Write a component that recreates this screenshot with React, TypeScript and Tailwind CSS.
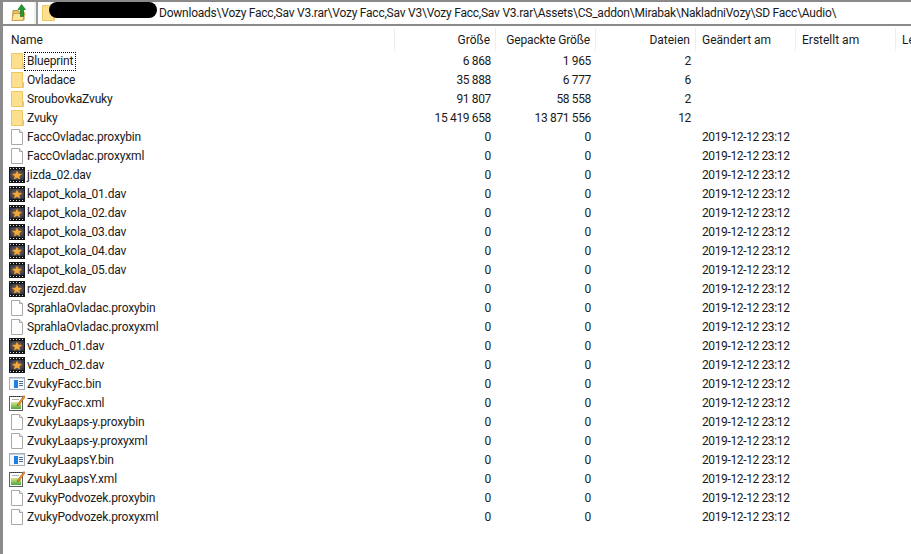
const FONT = "font-['Roboto',sans-serif]";

type Kind = 'folder' | 'file' | 'dav' | 'bin' | 'xml';

interface Row {
  name: string;
  kind: Kind;
  size: string;
  packed: string;
  files?: string;
}

const rows: Row[] = [
  { name: 'Blueprint', kind: 'folder', size: '6 868', packed: '1 965', files: '2' },
  { name: 'Ovladace', kind: 'folder', size: '35 888', packed: '6 777', files: '6' },
  { name: 'SroubovkaZvuky', kind: 'folder', size: '91 807', packed: '58 558', files: '2' },
  { name: 'Zvuky', kind: 'folder', size: '15 419 658', packed: '13 871 556', files: '12' },
  { name: 'FaccOvladac.proxybin', kind: 'file', size: '0', packed: '0' },
  { name: 'FaccOvladac.proxyxml', kind: 'file', size: '0', packed: '0' },
  { name: 'jizda_02.dav', kind: 'dav', size: '0', packed: '0' },
  { name: 'klapot_kola_01.dav', kind: 'dav', size: '0', packed: '0' },
  { name: 'klapot_kola_02.dav', kind: 'dav', size: '0', packed: '0' },
  { name: 'klapot_kola_03.dav', kind: 'dav', size: '0', packed: '0' },
  { name: 'klapot_kola_04.dav', kind: 'dav', size: '0', packed: '0' },
  { name: 'klapot_kola_05.dav', kind: 'dav', size: '0', packed: '0' },
  { name: 'rozjezd.dav', kind: 'dav', size: '0', packed: '0' },
  { name: 'SprahlaOvladac.proxybin', kind: 'file', size: '0', packed: '0' },
  { name: 'SprahlaOvladac.proxyxml', kind: 'file', size: '0', packed: '0' },
  { name: 'vzduch_01.dav', kind: 'dav', size: '0', packed: '0' },
  { name: 'vzduch_02.dav', kind: 'dav', size: '0', packed: '0' },
  { name: 'ZvukyFacc.bin', kind: 'bin', size: '0', packed: '0' },
  { name: 'ZvukyFacc.xml', kind: 'xml', size: '0', packed: '0' },
  { name: 'ZvukyLaaps-y.proxybin', kind: 'file', size: '0', packed: '0' },
  { name: 'ZvukyLaaps-y.proxyxml', kind: 'file', size: '0', packed: '0' },
  { name: 'ZvukyLaapsY.bin', kind: 'bin', size: '0', packed: '0' },
  { name: 'ZvukyLaapsY.xml', kind: 'xml', size: '0', packed: '0' },
  { name: 'ZvukyPodvozek.proxybin', kind: 'file', size: '0', packed: '0' },
  { name: 'ZvukyPodvozek.proxyxml', kind: 'file', size: '0', packed: '0' },
];

function FileIcon({ kind }: { kind: Kind }) {
  if (kind === 'folder') {
    return (
      <svg width="16" height="16" viewBox="0 0 16 16">
        <path d="M2.5 0.5H13.5V15.5H2.5Z" fill="#fde08f" stroke="#eec75f" />
        <path d="M13.5 10.5H14.5V15.5H13.5Z" fill="#fff6d8" stroke="#e6c670" />
      </svg>
    );
  }
  if (kind === 'file') {
    return (
      <svg width="16" height="16" viewBox="0 0 16 16">
        <path d="M2.5 0.5H10.5L13.5 3.5V15.5H2.5Z" fill="#fff" stroke="#a8a8a8" />
        <path d="M10.5 0.5V3.5H13.5" fill="#f0f0f0" stroke="#a8a8a8" />
      </svg>
    );
  }
  if (kind === 'dav') {
    return (
      <svg width="16" height="16" viewBox="0 0 16 16">
        <defs>
          <radialGradient id="davGlow" cx="0.5" cy="0.5" r="0.6">
            <stop offset="0" stopColor="#a8703a" />
            <stop offset="1" stopColor="#27364f" />
          </radialGradient>
        </defs>
        <rect x="0" y="0" width="16" height="16" fill="#161616" />
        <rect x="1" y="3" width="14" height="10" fill="url(#davGlow)" />
        <path d="M1 1h1v1H1zM4 1h1v1H4zM7 1h1v1H7zM10 1h1v1h-1zM13 1h1v1h-1zM1 14h1v1H1zM4 14h1v1H4zM7 14h1v1H7zM10 14h1v1h-1zM13 14h1v1h-1z" fill="#e0e0e0" />
        <path d="M8 3.5L9.3 6.8L13 7L10.2 9.2L11.2 12.6L8 10.7L4.8 12.6L5.8 9.2L3 7L6.7 6.8Z" fill="#f2a83a" />
      </svg>
    );
  }
  if (kind === 'bin') {
    return (
      <svg width="16" height="16" viewBox="0 0 16 16">
        <rect x="0.5" y="1.5" width="15" height="12" fill="#f4f7fb" stroke="#a3abb6" />
        <rect x="1" y="2" width="14" height="1" fill="#c4cedb" />
        <rect x="5" y="4" width="4" height="8" fill="#1f7fe0" />
        <path d="M10 5.5h4M10 7.5h4M10 9.5h4" stroke="#56708f" />
      </svg>
    );
  }
  return (
    <svg width="16" height="16" viewBox="0 0 16 16">
      <defs>
        <linearGradient id="xmlFill" x1="0" y1="0" x2="0" y2="1">
          <stop offset="0" stopColor="#d8e88a" />
          <stop offset="1" stopColor="#4fa83a" />
        </linearGradient>
      </defs>
      <rect x="0.5" y="1.5" width="13" height="14" fill="#fff" stroke="#5f5f5f" />
      <path d="M2 1.5h1M4 1.5h1M6 1.5h1M8 1.5h1M10 1.5h1" stroke="#333" />
      <rect x="2" y="7" width="10" height="7" fill="url(#xmlFill)" />
      <path d="M3 4.5h7" stroke="#b0b0b0" />
      <path d="M15 0.5L9 8.5L8 11L10.2 9.8L16 2Z" fill="#e8a020" stroke="#b3431e" strokeWidth="0.6" />
    </svg>
  );
}

function UpIcon() {
  return (
    <svg width="16" height="18" viewBox="0 0 16 18">
      <path d="M2 6.5H7L8 8H13V16H1.5Z" fill="#eebf5c" stroke="#c0943a" />
      <path d="M2.5 9.5H14L11.5 16.5H0.8Z" fill="#fbe39a" stroke="#cfa14a" />
      <path d="M10.5 0.5L14.5 5.5H12.5V12.5H9.5V5.5H7Z" fill="#1e9a30" stroke="#137023" strokeWidth="0.7" />
    </svg>
  );
}

const headerCell = 'h-full flex items-center border-r border-[#eeeeee]';
const columns = 'grid grid-cols-[392px_101px_100px_100px_100px_100px_15px] items-center';

export default function App() {
  return (
    <div className={`${FONT} w-[911px] h-[554px] overflow-hidden flex flex-col bg-white text-[12px] text-[#1a1a1a]`}>
      {/* Toolbar */}
      <div className="h-[26px] shrink-0 flex border-t-2 border-b-2 border-[#8a8a8a] bg-[#f0f0f0]">
        <div className="w-[3px] bg-[#8a8a8a]" />
        <div className="w-[31px] flex items-center justify-center bg-white">
          <UpIcon />
        </div>
        <div className="w-[2px] bg-[#f0f0f0]" />
        <div className="flex-1 flex items-center bg-white border-l-2 border-[#9a9a9a] pl-[4px] relative">
          <svg width="13" height="16" viewBox="0 0 13 16" className="shrink-0">
            <path d="M0.5 0.5H12.5V15.5H0.5Z" fill="#fde08f" stroke="#eec75f" />
          </svg>
          <span className="ml-[104px] whitespace-nowrap tracking-[-0.23px]">
            Downloads\Vozy Facc,Sav V3.rar\Vozy Facc,Sav V3\Vozy Facc,Sav V3.rar\Assets\CS_addon\Mirabak\NakladniVozy\SD Facc\Audio\
          </span>
          {/* redaction scribble */}
          <div className="absolute left-[11px] top-0 w-[108px] h-[16px] rounded-[8px] bg-black" />
        </div>
      </div>

      <div className="flex-1 flex min-h-0">
        <div className="w-[3px] shrink-0 bg-[#8a8a8a]" />
        <div className="flex-1 min-w-0">
          {/* Column headers */}
          <div className={`h-[24px] mt-[1px] pt-[1px] ${columns}`}>
            <div className={`${headerCell} pl-[8px]`}>Name</div>
            <div className={`${headerCell} justify-end pr-[5px]`}>Größe</div>
            <div className={`${headerCell} justify-end pr-[5px] tracking-[-0.15px]`}>Gepackte Größe</div>
            <div className={`${headerCell} justify-end pr-[5px]`}>Dateien</div>
            <div className={`${headerCell} pl-[6px]`}>Geändert am</div>
            <div className={`${headerCell} pl-[6px]`}>Erstellt am</div>
            <div className="pl-[6px] overflow-hidden whitespace-nowrap">Le</div>
          </div>

          {/* File rows */}
          {rows.map((row, i) => (
            <div key={row.name} className={`h-[19px] ${columns}`}>
              <div className="flex items-center pl-[6px]">
                <FileIcon kind={row.kind} />
                <span className={`px-[2px] leading-[17px] translate-y-[1px] tracking-[-0.15px] ${i === 0 ? 'outline-1 outline-dotted outline-black' : ''}`}>
                  {row.name}
                </span>
              </div>
              <div className="text-right pr-[5px] tracking-[-0.35px]">{row.size}</div>
              <div className="text-right pr-[5px] tracking-[-0.35px]">{row.packed}</div>
              <div className="text-right pr-[5px] tracking-[-0.35px]">{row.files}</div>
              <div className="pl-[6px] tracking-[-0.37px] whitespace-nowrap">{row.files ? '' : '2019-12-12 23:12'}</div>
            </div>
          ))}
        </div>
      </div>
    </div>
  );
}
